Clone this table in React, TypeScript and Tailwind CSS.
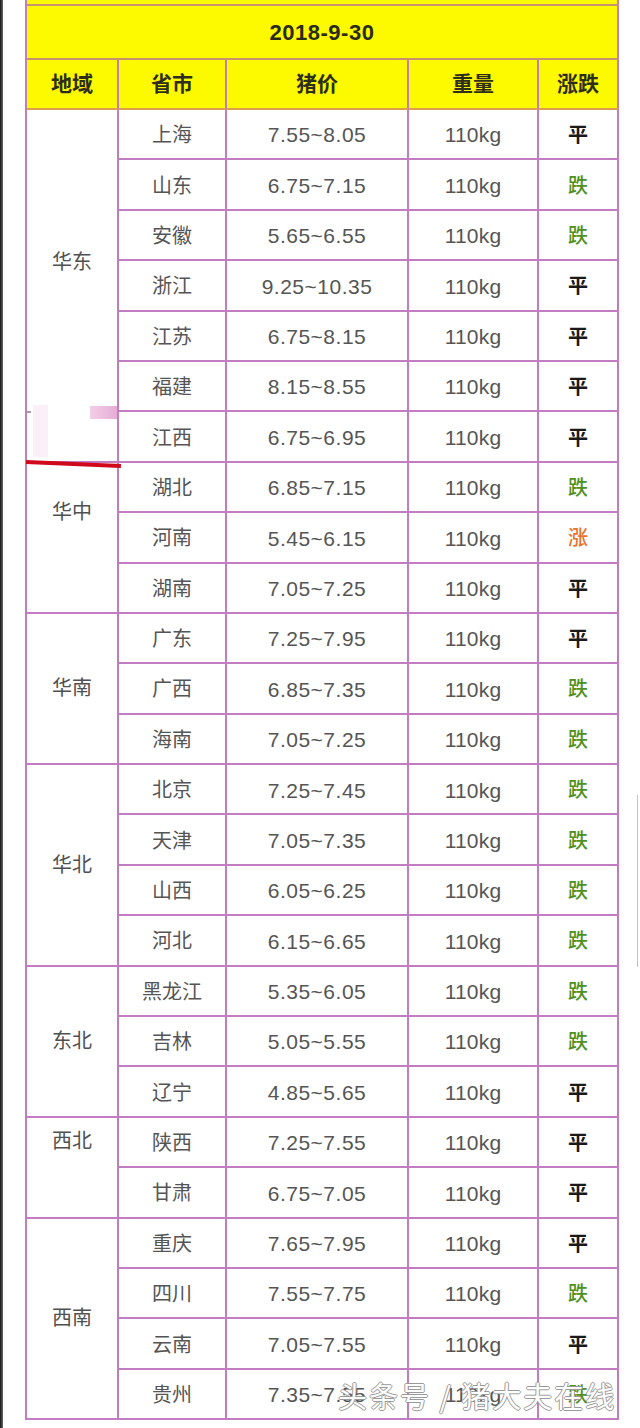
import React from "react";

type Row = { p: string; price: string; t: "平" | "跌" | "涨" };
type Group = { region: string; pad: string; rows: Row[] };

const groups: Group[] = [
  {
    region: "华东",
    pad: "items-start pt-[138px]",
    rows: [
      { p: "上海", price: "7.55~8.05", t: "平" },
      { p: "山东", price: "6.75~7.15", t: "跌" },
      { p: "安徽", price: "5.65~6.55", t: "跌" },
      { p: "浙江", price: "9.25~10.35", t: "平" },
      { p: "江苏", price: "6.75~8.15", t: "平" },
      { p: "福建", price: "8.15~8.55", t: "平" },
      { p: "江西", price: "6.75~6.95", t: "平" },
    ],
  },
  {
    region: "华中",
    pad: "items-start pt-[35px]",
    rows: [
      { p: "湖北", price: "6.85~7.15", t: "跌" },
      { p: "河南", price: "5.45~6.15", t: "涨" },
      { p: "湖南", price: "7.05~7.25", t: "平" },
    ],
  },
  {
    region: "华南",
    pad: "items-center",
    rows: [
      { p: "广东", price: "7.25~7.95", t: "平" },
      { p: "广西", price: "6.85~7.35", t: "跌" },
      { p: "海南", price: "7.05~7.25", t: "跌" },
    ],
  },
  {
    region: "华北",
    pad: "items-center",
    rows: [
      { p: "北京", price: "7.25~7.45", t: "跌" },
      { p: "天津", price: "7.05~7.35", t: "跌" },
      { p: "山西", price: "6.05~6.25", t: "跌" },
      { p: "河北", price: "6.15~6.65", t: "跌" },
    ],
  },
  {
    region: "东北",
    pad: "items-center",
    rows: [
      { p: "黑龙江", price: "5.35~6.05", t: "跌" },
      { p: "吉林", price: "5.05~5.55", t: "跌" },
      { p: "辽宁", price: "4.85~5.65", t: "平" },
    ],
  },
  {
    region: "西北",
    pad: "items-start pt-[9px]",
    rows: [
      { p: "陕西", price: "7.25~7.55", t: "平" },
      { p: "甘肃", price: "6.75~7.05", t: "平" },
    ],
  },
  {
    region: "西南",
    pad: "items-center",
    rows: [
      { p: "重庆", price: "7.65~7.95", t: "平" },
      { p: "四川", price: "7.55~7.75", t: "跌" },
      { p: "云南", price: "7.05~7.55", t: "平" },
      { p: "贵州", price: "7.35~7.55", t: "跌" },
    ],
  },
];

const spanClass: Record<number, string> = {
  2: "row-span-2",
  3: "row-span-3",
  4: "row-span-4",
  7: "row-span-7",
};

const cell = "flex justify-center items-center border-r-2 border-b-2 border-[#c27cc2]";

function Trend({ t }: { t: string }) {
  if (t === "跌") return <span className="text-[#4f9022] text-[20px] font-medium">跌</span>;
  if (t === "涨") return <span className="text-[#e8712c] text-[20px] font-medium">涨</span>;
  return <span className="text-[#1a1a1a] text-[20px] font-bold">平</span>;
}

export default function App() {
  return (
    <div className="relative w-[640px] h-[1428px] bg-white flex overflow-hidden font-['Liberation_Sans','Noto_Sans_CJK_SC',sans-serif]">
      <div className="w-[3px] h-full bg-gradient-to-r from-[#151515] to-[#6a6a6a]" />
      <div className="w-[22px]" />
      <div className="w-[594px] grid grid-cols-[92px_108px_182px_130px_80px] grid-rows-[6px_54px_50px_repeat(26,50.4px)] border-l-2 border-[#c27cc2] self-start">
        <div className="col-span-5 bg-[#fdfa00] border-r-2 border-b-2 border-b-[#c9946c] border-r-[#c27cc2]" />
        <div className="col-span-5 bg-[#fdfa00] flex items-center justify-center border-r-2 border-b-2 border-b-[#c9926a] border-r-[#c27cc2] text-[22px] font-bold tracking-[0.5px] text-[#2b2b1a]">
          2018-9-30
        </div>
        {["地域", "省市", "猪价", "重量", "涨跌"].map((h) => (
          <div
            key={h}
            className="flex justify-center items-center bg-[#fdfa00] border-r-2 border-r-[#c27cc2] border-b-2 border-b-[#dca04c] text-[21px] font-bold text-[#2e2e1a]"
          >
            {h}
          </div>
        ))}
        {groups.map((g) => (
          <React.Fragment key={g.region}>
            {g.rows.map((r, i) => (
              <React.Fragment key={r.p}>
                {i === 0 && (
                  <div
                    className={`${spanClass[g.rows.length]} flex justify-center ${g.pad} border-r-2 border-b-2 border-[#c27cc2] text-[20px] leading-[28px] text-[#505050]`}
                  >
                    {g.region}
                  </div>
                )}
                <div className={`${cell} text-[20px] text-[#555555] pt-[2px]`}>{r.p}</div>
                <div className={`${cell} text-[21px] tracking-[0.5px] text-[#555555] pt-[2px]`}>{r.price}</div>
                <div className={`${cell} text-[21px] tracking-[0.2px] text-[#555555] pt-[2px]`}>110kg</div>
                <div className={`${cell} pt-[2px]`}>
                  <Trend t={r.t} />
                </div>
              </React.Fragment>
            ))}
          </React.Fragment>
        ))}
      </div>
      <div className="w-[21px] h-full flex flex-col items-end">
        <div className="mt-[795px] mr-[2px] w-px h-[172px] bg-[#c4c4c4]" />
      </div>

      {/* editing marks over the first column */}
      <div className="absolute left-[33px] top-[405px] w-[15px] h-[52px] bg-[#fcf0f8]" />
      <div className="absolute left-[90px] top-[406px] w-[27px] h-[13px] bg-gradient-to-r from-[#f2cfe8] to-[#e6acd6]" />
      <div className="absolute left-[27px] top-[411px] w-[4px] h-[2px] bg-[#a0a0a0]" />
      <div className="absolute left-[26px] top-[460px] w-[95px] h-[4px] bg-[#d0081c] origin-left rotate-[2.4deg]" />

      {/* watermark */}
      <div className="absolute left-[338px] top-[1376px] text-[29px] leading-[38px] tracking-[2px] text-white font-['Noto_Sans_CJK_SC',sans-serif] [text-shadow:1px_0_#999,-1px_0_#999,0_1px_#999,0_-1px_#999] whitespace-nowrap">
        头条号 / 猪大夫在线
      </div>
    </div>
  );
}
